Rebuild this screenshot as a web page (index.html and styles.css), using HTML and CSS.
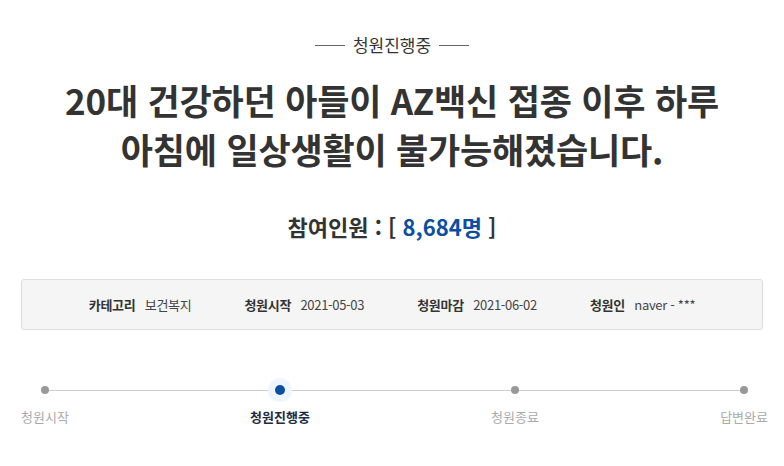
FILE: index.html
```html
<!DOCTYPE html>
<html lang="ko">
<head>
    <meta charset="UTF-8">
    <meta name="viewport" content="width=device-width, initial-scale=1.0">
    <title>청원진행중</title>
    <link rel="stylesheet" href="styles.css">
</head>
<body>
    <div class="petition">
        <div class="status"><span>청원진행중</span></div>

        <h1 class="title">20대 건강하던 아들이 AZ백신 접종 이후 하루<br>아침에 일상생활이 불가능해졌습니다.</h1>

        <p class="count">참여인원 : [ <span class="num">8,684명</span> ]</p>

        <ul class="info">
            <li><strong>카테고리</strong> 보건복지</li>
            <li><strong>청원시작</strong> 2021-05-03</li>
            <li><strong>청원마감</strong> 2021-06-02</li>
            <li><strong>청원인</strong> naver - ***</li>
        </ul>

        <ol class="steps">
            <li>청원시작</li>
            <li class="on">청원진행중</li>
            <li>청원종료</li>
            <li>답변완료</li>
        </ol>
    </div>
</body>
</html>
```

FILE: styles.css
```css
body {
    margin: 0;
    background: #fff;
    font-family: "Noto Sans CJK KR", "Noto Sans", sans-serif;
    color: #333;
}

.petition {
    padding: 32px 0 0;
}

.status {
    display: flex;
    justify-content: center;
    align-items: center;
    gap: 8px;
    font-size: 17px;
    line-height: 26px;
    color: #333;
}

.status::before,
.status::after {
    content: "";
    width: 30px;
    height: 1px;
    background: #666;
}

.title {
    margin: 17px 0 0;
    text-align: center;
    font-size: 35px;
    font-weight: 700;
    line-height: 49px;
    color: #333;
    letter-spacing: -0.2px;
}

.count {
    margin: 38px 0 0;
    text-align: center;
    font-size: 22px;
    font-weight: 700;
    line-height: 30px;
    color: #333;
}

.count .num {
    color: #0b4ea2;
}

.info {
    list-style: none;
    margin: 38px 21px 0;
    padding: 0;
    height: 49px;
    border: 1px solid #ddd;
    border-radius: 3px;
    background: #f5f5f5;
    display: flex;
    justify-content: center;
    align-items: center;
    gap: 53px;
    font-size: 13px;
    color: #444;
    letter-spacing: -0.3px;
}

.info strong {
    color: #333;
    margin-right: 6px;
}

.steps {
    list-style: none;
    margin: 56px 16px 0 21px;
    padding: 0;
    position: relative;
    display: flex;
    justify-content: space-between;
    font-size: 13px;
    color: #aaa;
}

.steps::before {
    content: "";
    position: absolute;
    left: 24px;
    right: 25px;
    top: 4px;
    height: 1px;
    background: #ccc;
}

.steps li {
    position: relative;
    display: flex;
    flex-direction: column;
    align-items: center;
    line-height: 20px;
}

.steps li::before {
    content: "";
    width: 8px;
    height: 8px;
    margin-bottom: 13px;
    border-radius: 50%;
    background: #999;
}

.steps li.on {
    color: #1c2b48;
    font-weight: 700;
}

.steps li.on::before {
    width: 10px;
    height: 10px;
    margin: -1px 0 12px;
    background: #0b4ea2;
    box-shadow: 0 0 0 7px #eef5fd;
}
```
